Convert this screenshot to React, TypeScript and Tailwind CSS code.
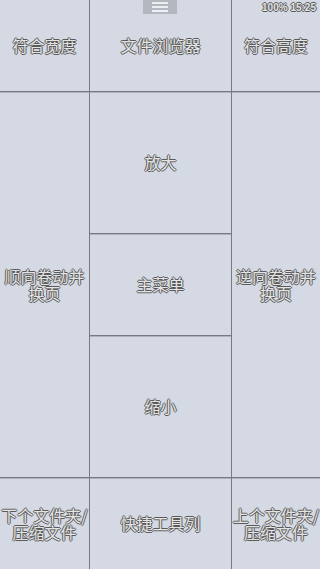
import React from "react";

const txt =
  "text-[16px] leading-[17px] text-[#e4e4e4] text-center [font-family:'Noto_Sans_CJK_SC','Noto_Sans',sans-serif] [text-shadow:1px_0_0_#5a5a5a,-1px_0_0_#5a5a5a,0_1px_0_#5a5a5a,0_-1px_0_#5a5a5a]";

function Cell({ className, lines }: { className: string; lines: string[] }) {
  return (
    <div className={`flex flex-col items-center justify-center ${className}`}>
      {lines.map((l) => (
        <div key={l} className={`${txt} h-[17px] flex items-center justify-center whitespace-nowrap`}>
          {l}
        </div>
      ))}
    </div>
  );
}

const lineB = "border-b border-[#767a82] shadow-[0_1px_0_#aeb3bc]";

export default function App() {
  return (
    <div className="relative w-[320px] h-[569px] bg-[#d4d9e3] flex overflow-hidden">
      <div className="w-[90px] h-full flex flex-col border-r border-[#767a82]">
        <Cell className={`h-[92px] ${lineB}`} lines={["符合宽度"]} />
        <Cell className={`flex-1 ${lineB}`} lines={["顺向卷动并", "换页"]} />
        <Cell className="h-[91px]" lines={["下个文件夹/", "压缩文件"]} />
      </div>
      <div className="w-[142px] h-full flex flex-col border-r border-[#767a82]">
        <Cell className={`h-[92px] ${lineB}`} lines={["文件浏览器"]} />
        <Cell className={`h-[142px] ${lineB}`} lines={["放大"]} />
        <Cell className={`h-[102px] ${lineB}`} lines={["主菜单"]} />
        <Cell className={`flex-1 ${lineB}`} lines={["缩小"]} />
        <Cell className="h-[91px]" lines={["快捷工具列"]} />
      </div>
      <div className="flex-1 h-full flex flex-col">
        <Cell className={`h-[92px] ${lineB}`} lines={["符合高度"]} />
        <Cell className={`flex-1 ${lineB}`} lines={["逆向卷动并", "换页"]} />
        <Cell className="h-[91px]" lines={["上个文件夹/", "压缩文件"]} />
      </div>
      <div className="absolute left-[143px] top-0 w-[34px] h-[14px] bg-[#b3b7bf] flex flex-col items-center justify-center gap-[2px]">
        <div className="w-[16px] h-[2px] bg-[#eceef2]" />
        <div className="w-[16px] h-[2px] bg-[#eceef2]" />
        <div className="w-[16px] h-[2px] bg-[#eceef2]" />
      </div>
      <div className="absolute right-[4px] top-[2px] text-[10px] leading-[11px] font-bold text-[#e4e4e4] [font-family:'Liberation_Sans',sans-serif] [text-shadow:1px_0_0_#5a5a5a,-1px_0_0_#5a5a5a,0_1px_0_#5a5a5a,0_-1px_0_#5a5a5a]">
        100% 15:25
      </div>
    </div>
  );
}
